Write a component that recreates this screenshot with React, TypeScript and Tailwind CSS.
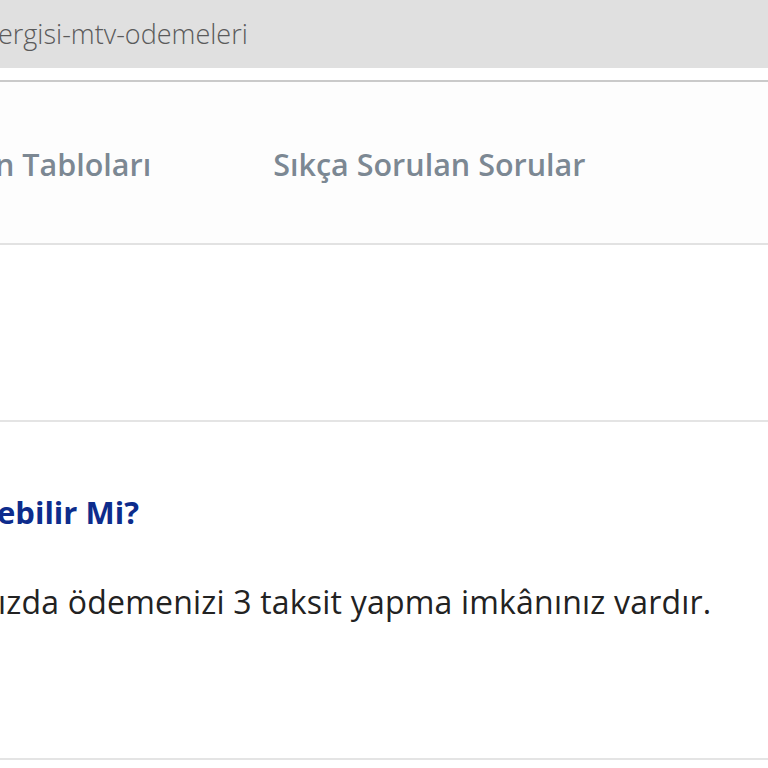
const SANS = "font-['Open_Sans','Noto_Sans',sans-serif]";

export default function App() {
  return (
    <div className={`w-[768px] h-[768px] overflow-hidden bg-white ${SANS}`}>
      {/* address bar strip */}
      <div className="h-[68px] bg-[#e0e0e0] flex items-center">
        <span className="-ml-[2px] text-[27px] font-light text-[#5a5a5a] leading-none pb-[1px]">
          ergisi-mtv-odemeleri
        </span>
      </div>
      <div className="h-[12px] bg-white" />
      <div className="h-[2px] bg-[#cacaca]" />

      {/* tabs */}
      <nav className="h-[163px] bg-[#fdfdfd] border-b-2 border-[#e2e2e2] flex items-center whitespace-nowrap">
        <span className="-ml-[5px] text-[30.5px] font-semibold text-[#7c8893] leading-none pt-[4px]">
          n Tabloları
        </span>
        <span className="ml-[122px] text-[30.5px] font-semibold text-[#7c8893] leading-none pt-[4px]">
          Sıkça Sorulan Sorular
        </span>
      </nav>

      <div className="h-[175px]" />

      {/* faq item */}
      <section className="border-t-2 border-[#e4e4e4] h-[340px] border-b-2 whitespace-nowrap">
        <h3 className="mt-[70px] -ml-[3px] text-[31px] font-bold text-[#0d2c8c] leading-[40px]">
          ebilir Mi?
        </h3>
        <p className="mt-[50px] -ml-[2px] text-[32px] text-[#222] leading-[40px] tracking-[0.2px]">
          ızda ödemenizi 3 taksit yapma imkânınız vardır.
        </p>
      </section>
    </div>
  );
}
